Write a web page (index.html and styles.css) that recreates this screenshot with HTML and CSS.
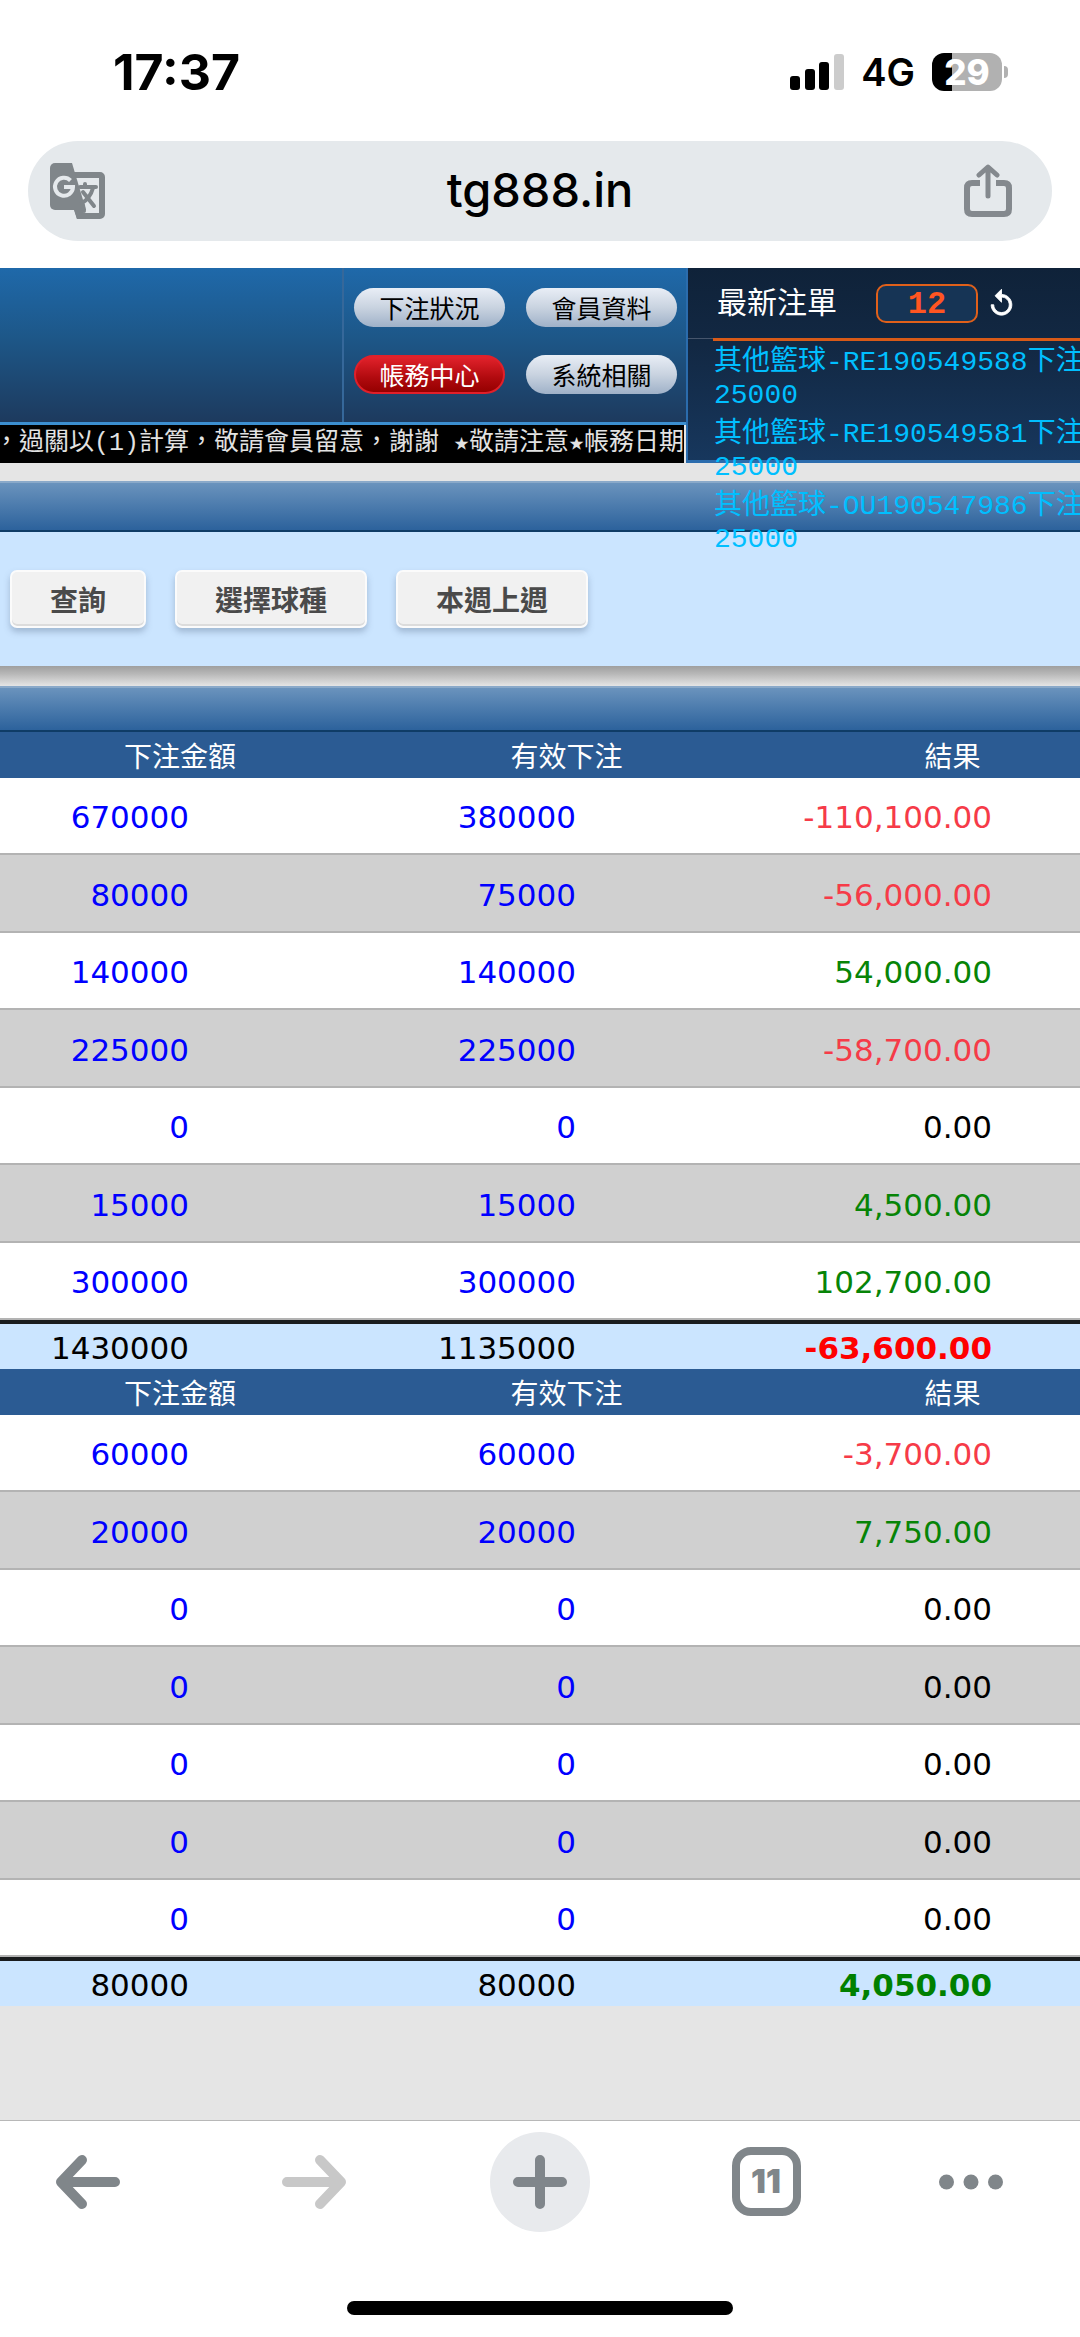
FILE: index.html
```html
<!DOCTYPE html>
<html lang="zh-Hant">
<head>
<meta charset="utf-8">
<meta name="viewport" content="width=device-width, initial-scale=1">
<title>tg888.in</title>
<link rel="stylesheet" href="styles.css">
</head>
<body>
<div class="status-bar">
  <span class="clock">17:37</span>
  <div class="status-right">
    <svg class="signal" viewBox="0 0 54 36" aria-hidden="true">
      <rect x="0" y="22" width="10" height="14" rx="3"/>
      <rect x="15" y="15" width="10" height="21" rx="3"/>
      <rect x="29" y="8" width="10" height="28" rx="3"/>
      <rect x="44" y="0" width="10" height="36" rx="3" fill="#ccc"/>
    </svg>
    <span class="network">4G</span>
    <div class="battery-wrap"><span class="battery">29</span><span class="battery-tip"></span></div>
  </div>
</div>

<div class="address-bar">
  <button class="icon-button" aria-label="翻譯">
    <svg width="55" height="56" viewBox="0 0 55 56">
      <path fill="#80868a" fill-rule="evenodd" d="M22 9h28a5 5 0 0 1 5 5v37a5 5 0 0 1-5 5H27l-3-9zM25 15l9 29-4 4 1 2h18V15z"/>
      <path fill="#80868a" d="M5 0h17l14 47H5a5 5 0 0 1-5-5V5a5 5 0 0 1 5-5z"/>
      <path fill="#80868a" d="M24 46h12l-7 10h-2z"/>
      <path fill="none" stroke="#e5e9ec" stroke-width="4" d="M20.500 17.500A9 9 0 1 0 23 24h-9"/>
      <path fill="none" stroke="#80868a" stroke-width="4" stroke-linecap="round" stroke-linejoin="round" d="M30 24h16M35 21v2M43 25c-2 7-6 12-11 15M33 29l11 14M33 42l1 6"/>
    </svg>
  </button>
  <span class="address">tg888.in</span>
  <button class="icon-button" aria-label="分享">
    <svg width="48" height="54" viewBox="0 0 48 54" fill="none" stroke="#84898e" stroke-width="6" stroke-linejoin="round">
      <path d="M16 19H8q-5 0-5 5v21q0 5 5 5h32q5 0 5-5V24q0-5-5-5h-8"/>
      <path stroke-width="5" stroke-linecap="round" d="M24 32V4M15 11l9-8 9 8"/>
    </svg>
  </button>
</div>

<main class="site">
  <header class="site-header">
    <div class="header-left">
      <div class="masthead">
        <nav class="menu">
          <button class="pill">下注狀況</button>
          <button class="pill">會員資料</button>
          <button class="pill pill-active">帳務中心</button>
          <button class="pill">系統相關</button>
        </nav>
      </div>
      <div class="ticker">，過關以(1)計算，敬請會員留意，謝謝 ★敬請注意★帳務日期(</div>
    </div>
    <aside class="latest">
      <div class="latest-head">
        <h2 class="latest-title">最新注單</h2>
        <span class="latest-count">12</span>
        <button class="refresh" aria-label="重新整理">
          <svg width="31" height="31" viewBox="0 0 24 24" fill="#fff" stroke="#fff" stroke-width=".7"><path d="M12 5V1L7 6l5 5V7c3.310 0 6 2.690 6 6s-2.690 6-6 6-6-2.690-6-6H4c0 4.420 3.580 8 8 8s8-3.580 8-8-3.580-8-8-8z"/></svg>
        </button>
      </div>
      <ul class="latest-list">
        <li>其他籃球-RE190549588下注<br>25000</li>
        <li>其他籃球-RE190549581下注<br>25000</li>
        <li>其他籃球-OU190547986下注<br>25000</li>
      </ul>
    </aside>
  </header>

  <div class="section-bar section-bar-first"></div>
  <div class="filters">
    <button class="filter">查詢</button>
    <button class="filter">選擇球種</button>
    <button class="filter">本週上週</button>
  </div>
  <div class="divider"></div>
  <div class="section-bar"></div>

  <table class="report">
    <thead><tr><th>下注金額</th><th>有效下注</th><th>結果</th></tr></thead>
    <tbody>
      <tr><td><a href="#">670000</a></td><td><a href="#">380000</a></td><td class="loss">-110,100.00</td></tr>
      <tr><td><a href="#">80000</a></td><td><a href="#">75000</a></td><td class="loss">-56,000.00</td></tr>
      <tr><td><a href="#">140000</a></td><td><a href="#">140000</a></td><td class="gain">54,000.00</td></tr>
      <tr><td><a href="#">225000</a></td><td><a href="#">225000</a></td><td class="loss">-58,700.00</td></tr>
      <tr><td><a href="#">0</a></td><td><a href="#">0</a></td><td>0.00</td></tr>
      <tr><td><a href="#">15000</a></td><td><a href="#">15000</a></td><td class="gain">4,500.00</td></tr>
      <tr><td><a href="#">300000</a></td><td><a href="#">300000</a></td><td class="gain">102,700.00</td></tr>
    </tbody>
    <tfoot><tr><td>1430000</td><td>1135000</td><td class="total-loss">-63,600.00</td></tr></tfoot>
  </table>

  <table class="report">
    <thead><tr><th>下注金額</th><th>有效下注</th><th>結果</th></tr></thead>
    <tbody>
      <tr><td><a href="#">60000</a></td><td><a href="#">60000</a></td><td class="loss">-3,700.00</td></tr>
      <tr><td><a href="#">20000</a></td><td><a href="#">20000</a></td><td class="gain">7,750.00</td></tr>
      <tr><td><a href="#">0</a></td><td><a href="#">0</a></td><td>0.00</td></tr>
      <tr><td><a href="#">0</a></td><td><a href="#">0</a></td><td>0.00</td></tr>
      <tr><td><a href="#">0</a></td><td><a href="#">0</a></td><td>0.00</td></tr>
      <tr><td><a href="#">0</a></td><td><a href="#">0</a></td><td>0.00</td></tr>
      <tr><td><a href="#">0</a></td><td><a href="#">0</a></td><td>0.00</td></tr>
    </tbody>
    <tfoot><tr><td>80000</td><td>80000</td><td class="total-gain">4,050.00</td></tr></tfoot>
  </table>
</main>

<footer class="browser-footer">
  <div class="toolbar">
    <button class="tool tool-back" aria-label="上一頁">
      <svg width="64" height="54" viewBox="0 0 64 54" fill="none" stroke="#80868a" stroke-width="10" stroke-linecap="round" stroke-linejoin="round"><path d="M59 27H6M26 5L5 27l21 22"/></svg>
    </button>
    <button class="tool" aria-label="下一頁">
      <svg width="64" height="54" viewBox="0 0 64 54" fill="none" stroke="#c8c8c8" stroke-width="10" stroke-linecap="round" stroke-linejoin="round"><path d="M5 27h53M38 5l21 22-21 22"/></svg>
    </button>
    <button class="tool" aria-label="新分頁">
      <span class="new-tab"><svg width="54" height="54" viewBox="0 0 54 54" fill="none" stroke="#80868b" stroke-width="10" stroke-linecap="round"><path d="M27 5v44M5 27h44"/></svg></span>
    </button>
    <button class="tool"><span class="tab-count">11</span></button>
    <button class="tool tool-more" aria-label="更多">
      <svg width="64" height="16" viewBox="0 0 64 16" fill="#80868a"><circle cx="7.500" cy="8" r="7.500"/><circle cx="32" cy="8" r="7.500"/><circle cx="56.500" cy="8" r="7.500"/></svg>
    </button>
  </div>
  <div class="home-indicator"></div>
</footer>
</body>
</html>
```
FILE: styles.css
```css
* { box-sizing: border-box; }

body {
  margin: 0;
  min-height: 100vh;
  display: flex;
  flex-direction: column;
  overflow-x: hidden;
  background: #fff;
  color: #000;
  font-family: Inter, "Noto Sans CJK TC", sans-serif;
}

button {
  margin: 0;
  padding: 0;
  border: 0;
  background: none;
  color: inherit;
  font: inherit;
}

svg { display: block; }

/* status bar */
.status-bar {
  display: flex;
  align-items: center;
  justify-content: space-between;
  height: 141px;
  padding: 2px 72px 0 113px;
}

.clock { font-size: 50px; font-weight: 700; }

.status-right { display: flex; align-items: center; gap: 17px; }
.signal { width: 54px; height: 36px; }
.network { font-size: 38px; font-weight: 600; }
.battery-wrap { display: flex; align-items: center; gap: 2px; }

.battery {
  width: 70px;
  height: 38px;
  border-radius: 12px;
  background: linear-gradient(90deg, #000 29%, #b1b1b1 29%);
  color: #fff;
  font-size: 35px;
  font-weight: 800;
  line-height: 38px;
  text-align: center;
}

.battery-tip {
  width: 4px;
  height: 12px;
  border-radius: 0 6px 6px 0;
  background: #b1b1b1;
}

/* address bar */
.address-bar {
  display: grid;
  grid-template-columns: 1fr auto 1fr;
  align-items: center;
  height: 100px;
  margin: 0 28px 27px;
  border-radius: 50px;
  background: #e5e9ec;
}

.address { font-size: 47px; font-weight: 500; line-height: 56px; padding-bottom: 2px; }
.icon-button { justify-self: start; padding-left: 22px; }
.address + .icon-button { justify-self: end; padding: 0 40px 0 0; }

/* site */
.site {
  flex: 1;
  overflow: hidden;
  background: #e5e5e5;
  font-family: "DejaVu Sans", "Noto Sans CJK TC", sans-serif;
}

.site-header {
  position: relative;
  z-index: 1;
  display: grid;
  grid-template-columns: minmax(0, 1fr) 394px;
  height: 196px;
}

.header-left { display: flex; flex-direction: column; }

.masthead {
  display: flex;
  justify-content: flex-end;
  height: 157px;
  border-bottom: 3px solid #3c8fd0;
  background: linear-gradient(#1f69aa, #1d5788 45%, #1d3a5e);
}

.menu {
  display: grid;
  grid-template-columns: 151px 151px;
  gap: 28px 21px;
  align-content: start;
  width: 344px;
  padding: 20px 10px;
  border-left: 2px solid #36689a;
}

.pill {
  height: 39px;
  border-radius: 20px;
  background: linear-gradient(#e9eef6, #c9d3e0 50%, #9fb1c8);
  font-family: "Noto Sans CJK TC", sans-serif;
  font-size: 25px;
  line-height: 37px;
}

.pill-active {
  border: 2px solid #e0202a;
  background: linear-gradient(#e2222b, #b00a0e 60%, #950000);
  color: #fff;
  line-height: 33px;
}

.ticker {
  height: 38px;
  margin-right: 2px;
  overflow: hidden;
  background: #000;
  color: #e2e2e2;
  font-family: "Liberation Mono", "DejaVu Sans Mono", "Noto Sans CJK TC", monospace;
  font-size: 25px;
  line-height: 38px;
  text-indent: -6px;
  white-space: nowrap;
}

.latest {
  height: 195px;
  border-bottom: 3px solid #2b6cad;
  border-left: 2px solid #2b6cad;
  background:
    linear-gradient(#46556c, #46556c) 0 70px / 25px 1px no-repeat,
    linear-gradient(#0f2239, #122843 40%, #17375d);
}

.latest-head {
  display: flex;
  align-items: center;
  height: 73px;
  margin-left: 25px;
  padding-left: 4px;
  border-bottom: 3px solid #d85a18;
}

.latest-title {
  margin: 0;
  padding-bottom: 6px;
  color: #fff;
  font-family: "Noto Sans CJK TC", sans-serif;
  font-size: 30px;
  font-weight: 400;
  line-height: 40px;
}

.latest-count {
  width: 102px;
  height: 39px;
  margin: 0 8px 0 39px;
  border: 2px solid #e0601a;
  border-radius: 10px;
  background: #163455;
  color: #ff5522;
  font: bold 32px/37px "Liberation Mono", monospace;
  text-align: center;
}

.latest-list {
  margin: 0;
  padding: 5px 0 0 26px;
  list-style: none;
  color: #00bfff;
  font: 28px/33px "Liberation Mono", "Noto Sans CJK TC", monospace;
  white-space: nowrap;
}

.latest-list li { height: 72px; }

.section-bar {
  height: 46px;
  border-top: 2px solid #8aa9c9;
  border-bottom: 2px solid #0f3c66;
  background: linear-gradient(#6a93bd, #2c629c);
}

.section-bar-first { height: 51px; margin-top: 17px; }

.filters {
  display: flex;
  gap: 29px;
  height: 134px;
  padding: 38px 10px;
  background: #cbe5ff;
}

.filter {
  padding: 0 38px;
  height: 58px;
  border: 2px solid #fbfbfb;
  border-radius: 7px;
  background: #f1f1f1;
  box-shadow: inset 0 -2px 0 #dcdcdc, 0 4px 6px rgba(80, 100, 130, .35);
  color: #4a4a4a;
  font-family: "Noto Sans CJK TC", sans-serif;
  font-size: 28px;
  font-weight: 700;
  line-height: 54px;
}

.divider {
  height: 20px;
  background: linear-gradient(#9f9f9f, #b8b8b8 40%, #e5e5e5);
}

/* report tables */
.report {
  width: 100%;
  border-collapse: separate;
  border-spacing: 0;
  table-layout: fixed;
  font-size: 31px;
}

.report th {
  height: 46px;
  padding: 0;
  background: #2b5b93;
  color: #fff;
  font-family: "Noto Sans CJK TC", sans-serif;
  font-size: 28px;
  font-weight: 400;
  line-height: 44px;
}

.report th:nth-child(1) { width: 373px; padding-right: 13px; }
.report th:nth-child(2) { width: 387px; }
.report th:nth-child(3) { padding-left: 65px; }

.report td {
  height: 77px;
  padding: 3px 184px 0 0;
  border-bottom: 2px solid #b3b3b3;
  background: #fff;
  text-align: right;
}

.report td:nth-child(3) { padding-right: 88px; }

.report tbody tr:nth-child(even) td {
  height: 78px;
  background: #d0d0d0;
}

.report tfoot td {
  height: 49px;
  border-top: 4px solid #1a1c1e;
  border-bottom: 0;
  background: #cbe5ff;
}

.report a { color: #00f; text-decoration: none; }
.report .loss { color: #f63b48; }
.report .gain { color: #078407; }
.report .total-loss { color: #f00; font-weight: 700; }
.report .total-gain { color: #008000; font-weight: 700; }

/* browser toolbar */
.browser-footer { border-top: 1px solid #b8b8b8; }

.toolbar {
  display: grid;
  grid-template-columns: 201fr 226fr 226fr 226fr 201fr;
  align-items: center;
  height: 120px;
  padding-top: 1px;
}

.tool { display: flex; justify-content: center; }
.tool-back { padding-right: 25px; }
.tool-more { padding-right: 17px; }

.new-tab {
  display: grid;
  place-items: center;
  width: 100px;
  height: 100px;
  border-radius: 50%;
  background: #e8eaed;
}

.tab-count {
  width: 69px;
  height: 69px;
  border: 8px solid #80868a;
  border-radius: 19px;
  color: #80868a;
  font-size: 33px;
  font-weight: 900;
  line-height: 53px;
  text-align: center;
}

.home-indicator {
  width: 386px;
  height: 14px;
  margin: 60px auto 22px;
  border-radius: 7px;
  background: #000;
}
```
